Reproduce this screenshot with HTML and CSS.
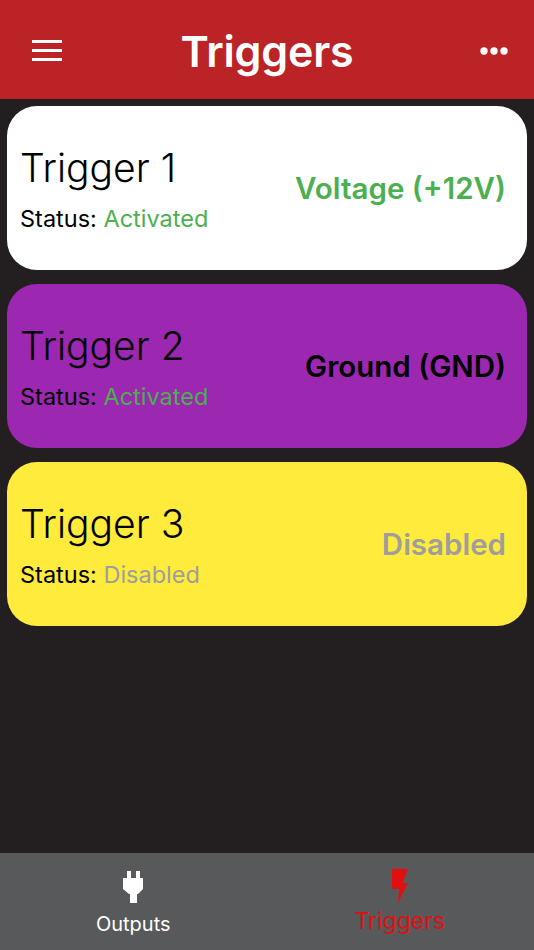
FILE: index.html
```html
<!DOCTYPE html>
<html lang="en">
<head>
  <meta charset="UTF-8" />
  <meta name="viewport" content="width=device-width, initial-scale=1.0"/>
  <title>Triggers</title>
  <link rel="stylesheet" href="styles.css">
</head>
<body>

  <header class="topbar">
    <svg class="menu-icon" width="30" height="21" viewBox="0 0 30 21" fill="#fff">
      <rect y="0" width="30" height="3"/>
      <rect y="9" width="30" height="3"/>
      <rect y="18" width="30" height="3"/>
    </svg>
    <h1>Triggers</h1>
    <svg class="more-icon" width="28" height="8" viewBox="0 0 28 8" fill="#fff">
      <circle cx="4" cy="4" r="3.7"/>
      <circle cx="14" cy="4" r="3.7"/>
      <circle cx="24" cy="4" r="3.7"/>
    </svg>
  </header>

  <main class="list">
    <div class="card card-white">
      <div class="card-info">
        <div class="card-title">Trigger 1</div>
        <div class="card-status">Status: <span class="green">Activated</span></div>
      </div>
      <div class="card-mode green">Voltage (+12V)</div>
    </div>

    <div class="card card-purple">
      <div class="card-info">
        <div class="card-title">Trigger 2</div>
        <div class="card-status">Status: <span class="green">Activated</span></div>
      </div>
      <div class="card-mode">Ground (GND)</div>
    </div>

    <div class="card card-yellow">
      <div class="card-info">
        <div class="card-title">Trigger 3</div>
        <div class="card-status">Status: <span class="grey">Disabled</span></div>
      </div>
      <div class="card-mode grey">Disabled</div>
    </div>
  </main>

  <nav class="tabbar">
    <div class="tab">
      <svg width="22" height="32" viewBox="0 0 22 32" fill="#fff">
        <path d="M5 0h4v7h5V0h4v7h3v11l-5 5h-1v9H8v-9H7l-6-5V7h4z"/>
      </svg>
      <span>Outputs</span>
    </div>
    <div class="tab tab-active">
      <svg width="16" height="34" viewBox="0 0 16 34" fill="#e01010">
        <path d="M0 0h16l-5.500 14H16L6 34l1-14H0z"/>
      </svg>
      <span>Triggers</span>
    </div>
  </nav>

</body>
</html>
```

FILE: styles.css
```css
* {
  box-sizing: border-box;
}
body {
  margin: 0;
  width: 534px;
  height: 950px;
  display: flex;
  flex-direction: column;
  background-color: #231f20;
  font-family: Inter, "Liberation Sans", sans-serif;
  color: #000;
}
.topbar {
  height: 99px;
  flex-shrink: 0;
  background-color: #bc2326;
  color: white;
  display: grid;
  grid-template-columns: 1fr auto 1fr;
  align-items: center;
  padding: 2px 26px 0;
}
.topbar h1 {
  margin: 0;
  font-size: 43px;
  font-weight: 600;
  letter-spacing: -0.2px;
}
.menu-icon {
  margin-left: 6px;
}
.more-icon {
  justify-self: end;
}
.list {
  flex: 1;
  display: flex;
  flex-direction: column;
  gap: 14px;
  padding: 7px 7px 0;
}
.card {
  height: 164px;
  border-radius: 30px;
  display: flex;
  align-items: center;
  justify-content: space-between;
  padding: 0 21px 0 13px;
}
.card-white {
  background-color: #fff;
}
.card-purple {
  background-color: #9c27b0;
}
.card-yellow {
  background-color: #ffeb3b;
}
.card-title {
  font-size: 39px;
  font-weight: 300;
  line-height: 46px;
}
.card-status {
  font-size: 23.500px;
  line-height: 27px;
  margin-top: 14px;
}
.card-mode {
  font-size: 29.500px;
  font-weight: 600;
}
.green {
  color: #4caf50;
}
.grey {
  color: #9e9e9e;
}
.tabbar {
  height: 97px;
  flex-shrink: 0;
  background-color: #58595b;
  display: flex;
}
.tab {
  flex: 1;
  display: flex;
  flex-direction: column;
  align-items: center;
  padding-top: 18px;
  color: white;
  font-size: 20px;
}
.tab span {
  margin-top: 9px;
}
.tab-active {
  padding-top: 16px;
  padding-right: 1px;
  color: #e01010;
  font-size: 23px;
}
.tab-active span {
  margin-top: 4px;
}
```
